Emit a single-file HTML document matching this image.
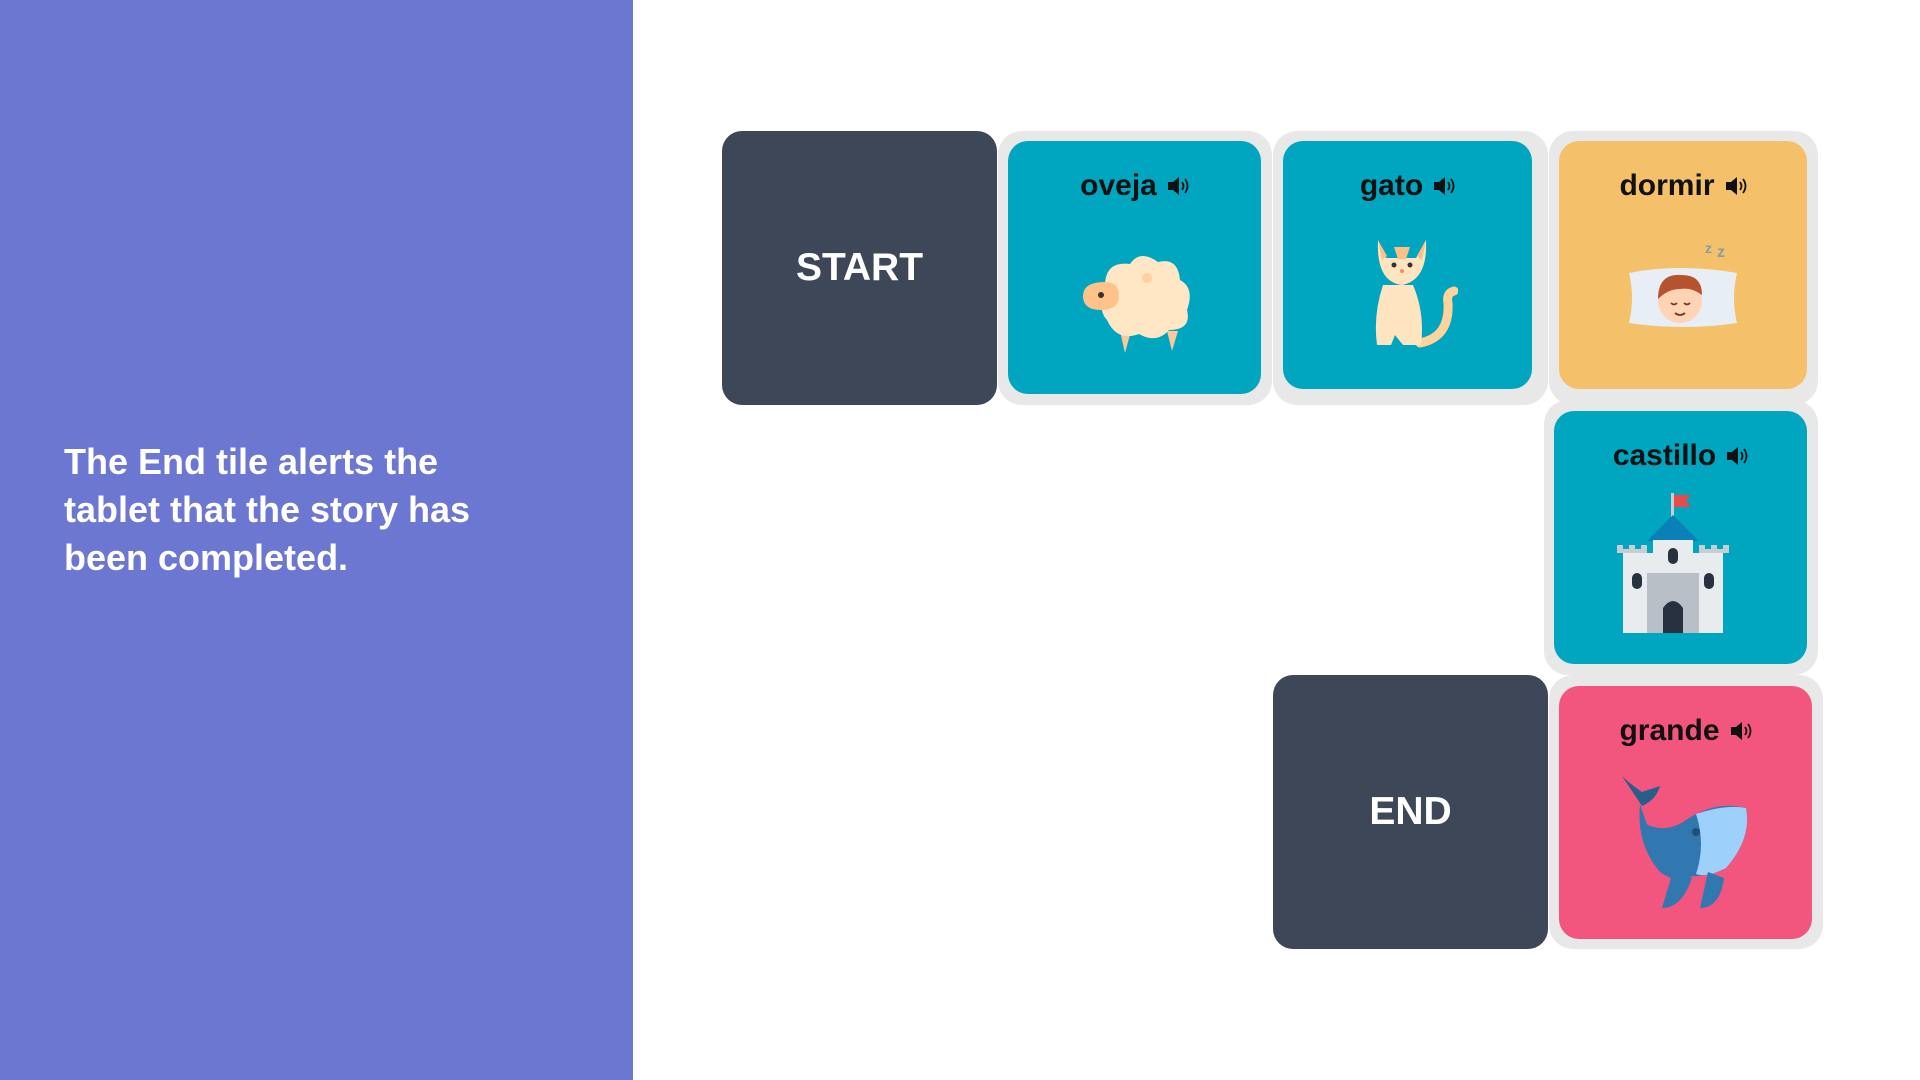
<!DOCTYPE html>
<html><head><meta charset="utf-8"><style>
body{margin:0;width:1920px;height:1080px;position:relative;background:#fff;overflow:hidden;font-family:"Liberation Sans",sans-serif}
.left{position:absolute;left:0;top:0;width:633px;height:1080px;background:#6b77d1}
.left p{position:absolute;left:64px;top:438px;margin:0;color:#fff;font-weight:bold;font-size:36px;line-height:48px;width:460px}
.dark{position:absolute;background:#3d4757;border-radius:20px;color:#fff;font-weight:bold;font-size:39px;display:flex;align-items:center;justify-content:center}
.fr{position:absolute;background:#e8e8e8;border-radius:24px}
.in{position:absolute;border-radius:20px}
.lbl{position:absolute;left:0;right:0;top:28px;text-align:center;font-weight:bold;font-size:30px;color:#111;white-space:nowrap}
.lbl svg{vertical-align:-2px;margin-left:10px}
.pic{position:absolute;left:0;right:0;top:80px;display:flex;justify-content:center}
</style></head><body>
<div class="left"><p>The End tile alerts the tablet that the story has been completed.</p></div>

<div class="dark" style="left:722px;top:131px;width:275px;height:274px">START</div>
<div class="dark" style="left:1273px;top:675px;width:275px;height:274px">END</div>

<svg width="0" height="0" style="position:absolute"><defs><g id="spk"><path d="M1 7h5l6-5v18l-6-5H1z" fill="#111"/><path d="M15 7q3 4 0 8M18 4q5 7 0 14" stroke="#111" stroke-width="1.8" fill="none"/></g></defs></svg>

<div class="fr" style="left:998px;top:131px;width:274px;height:274px"></div>
<div class="in" style="left:1008px;top:141px;width:253px;height:253px;background:#00a5bf">
 <div class="lbl">oveja<svg width="22" height="22"><use href="#spk"/></svg></div>
 <div class="pic" style="top:105px"><svg width="120" height="110" viewBox="0 0 120 110">
  <path d="M45 85l5 22 6-22zM92 85l5 20 6-20z" fill="#ffc89a"/>
  <path d="M30 40q0-25 25-22q10-15 28-2q20-5 22 18q15 8 7 30q5 20-18 20q-12 14-30 4q-22 8-32-14q-10-10-2-34z" fill="#ffe7c6"/>
  <circle cx="72" cy="32" r="5" fill="#ffcfa0"/>
  <path d="M8 50q0-14 22-14q14 0 14 14q0 14-18 14q-18 0-18-14z" fill="#ffc38a"/>
  <circle cx="26" cy="49" r="3" fill="#333"/>
 </svg></div>
</div>

<div class="fr" style="left:1273px;top:131px;width:275px;height:274px"></div>
<div class="in" style="left:1283px;top:141px;width:249px;height:248px;background:#00a5bf">
 <div class="lbl">gato<svg width="22" height="22"><use href="#spk"/></svg></div>
 <div class="pic" style="top:94px"><svg width="100" height="120" viewBox="0 0 100 120">
  <path d="M62 108q30-6 28-40q-2-10 6-12" stroke="#ffd39a" stroke-width="9" fill="none" stroke-linecap="round"/>
  <path d="M25 50q-10 30-6 60h14l4-10 8 10h18q4-32-8-60z" fill="#ffe5bf"/>
  <path d="M20 5l8 18 30 0 10-18q2 40-24 45q-26-3-24-45z" fill="#ffe5bf"/>
  <path d="M36 12h16l-4 12h-8z" fill="#ffbf85"/>
  <path d="M20 5l9 16-5 4zM68 5l-9 16 5 4z" fill="#ffbf85"/>
  <circle cx="36" cy="30" r="2.5" fill="#333"/><circle cx="52" cy="30" r="2.5" fill="#333"/>
  <circle cx="44" cy="36" r="2" fill="#f28a70"/>
 </svg></div>
</div>

<div class="fr" style="left:1549px;top:131px;width:269px;height:274px"></div>
<div class="in" style="left:1559px;top:141px;width:248px;height:248px;background:#f4c16a">
 <div class="lbl">dormir<svg width="22" height="22"><use href="#spk"/></svg></div>
 <div class="pic" style="top:92px"><svg width="120" height="110" viewBox="0 0 120 110">
  <text x="82" y="20" font-size="14" font-weight="bold" fill="#8a9aa8" font-family="Liberation Sans">z</text>
  <text x="94" y="24" font-size="16" font-weight="bold" fill="#8a9aa8" font-family="Liberation Sans">z</text>
  <text x="90" y="50" font-size="22" font-weight="bold" fill="#8a9aa8" font-family="Liberation Sans">z</text>
  <path d="M6 40q50-10 108 0q-6 25 0 50q-54 8-108 0q6-25 0-50z" fill="#e8eef6"/>
  <circle cx="57" cy="68" r="22" fill="#ffd3b6"/>
  <path d="M35 66q0-26 24-24q20 0 20 20q-10-8-22-6q-12 0-22 10z" fill="#b5532c"/>
  <path d="M48 70q3 3 6 0M61 70q3 3 6 0M52 80q5 4 10 0" stroke="#7a3a1c" stroke-width="1.8" fill="none"/>
 </svg></div>
</div>

<div class="fr" style="left:1544px;top:400px;width:274px;height:275px"></div>
<div class="in" style="left:1554px;top:411px;width:253px;height:253px;background:#00a5bf">
 <div class="lbl">castillo<svg width="22" height="22"><use href="#spk"/></svg></div>
 <div class="pic" style="top:82px"><svg width="140" height="140" viewBox="0 0 140 140">
  <rect x="60" y="0" width="3" height="24" fill="#ccc"/><path d="M63 2h17l-5 6 5 6h-17z" fill="#e94b4b"/>
  <path d="M62 22l-26 26h52z" fill="#0a80b8"/>
  <rect x="42" y="47" width="40" height="40" fill="#e9ecef"/>
  <path d="M6 60v-8h6v4h6v-4h6v4h6v-4h6v8h52v-8h6v4h6v-4h6v4h6v-4h6v8z" fill="#c8cdd2"/>
  <rect x="12" y="60" width="30" height="80" fill="#e9ecef"/><rect x="82" y="60" width="30" height="80" fill="#e9ecef"/>
  <rect x="36" y="80" width="52" height="60" fill="#b8bfc6"/>
  <path d="M52 140v-25q10-14 20 0v25z" fill="#27313f"/>
  <rect x="57" y="55" width="10" height="16" rx="5" fill="#27313f"/>
  <rect x="21" y="80" width="10" height="16" rx="5" fill="#27313f"/><rect x="93" y="80" width="10" height="16" rx="5" fill="#27313f"/>
 </svg></div>
</div>

<div class="fr" style="left:1549px;top:675px;width:274px;height:274px"></div>
<div class="in" style="left:1559px;top:686px;width:253px;height:253px;background:#f2557d">
 <div class="lbl">grande<svg width="22" height="22"><use href="#spk"/></svg></div>
 <div class="pic" style="top:88px"><svg width="140" height="140" viewBox="0 0 140 140">
  <path d="M6 2q8 8 20 16q12-4 18-6q-4 14-18 20z" fill="#265f8a"/>
  <path d="M24 30q-4 40 20 68q18 14 40 0l-18-40q-20 10-34-4z" fill="#3278b0"/>
  <path d="M30 50q20 10 40-4q30-20 60-12q6 30-20 60q-20 10-44 8q-30-12-36-52z" fill="#3278b0"/>
  <path d="M80 40q30-10 50-6q6 30-20 60q-20 10-30 6q10-30 0-60z" fill="#9dd0fb"/>
  <path d="M58 94l-12 40q20 0 30-30zM92 98l-8 36q20 0 24-30z" fill="#3278b0"/>
  <circle cx="80" cy="58" r="4" fill="#1f4e78"/>
 </svg></div>
</div>
</body></html>
